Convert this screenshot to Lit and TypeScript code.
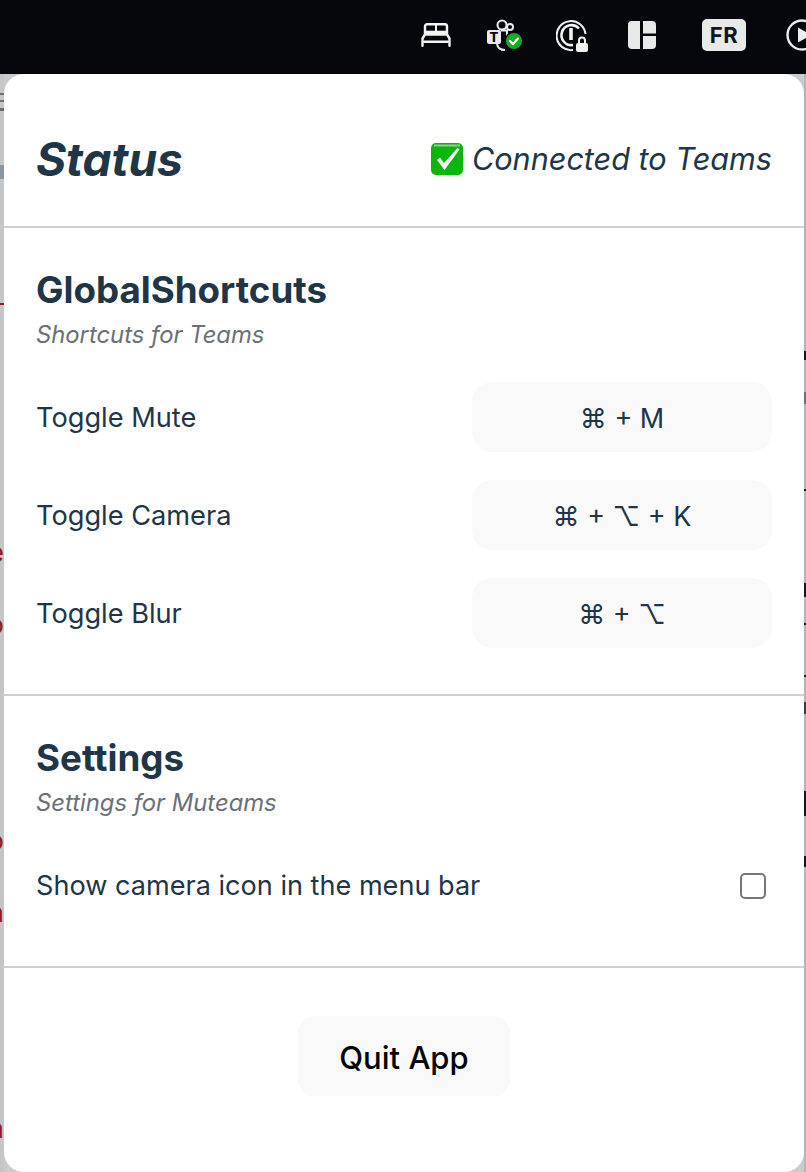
import { LitElement, html, css } from "lit";
import { customElement } from "lit/decorators.js";

const leftMarks = [
  { t: "e", y: 541 },
  { t: "o", y: 613 },
  { t: "o", y: 829 },
  { t: "n", y: 901 },
  { t: "a", y: 1117 },
];

const leftTicks = [
  { y: 93, h: 2, c: "#6d7075" },
  { y: 100, h: 2, c: "#6d7075" },
  { y: 108, h: 3, c: "#6d7075" },
  { y: 165, h: 14, c: "#8a96a2" },
  { y: 303, h: 2, c: "#8f1d1d" },
];

const rightTicks = [
  { y: 351, h: 9, c: "#14181f" },
  { y: 392, h: 12, c: "#5f7488" },
  { y: 489, h: 2, c: "#14181f" },
  { y: 583, h: 14, c: "#14181f" },
  { y: 623, h: 2, c: "#14181f" },
  { y: 675, h: 2, c: "#14181f" },
  { y: 702, h: 12, c: "#3a4048" },
  { y: 791, h: 25, c: "#14181f" },
  { y: 856, h: 11, c: "#14181f" },
];

@customElement("app-root")
export class AppRoot extends LitElement {
  static styles = css`
    :host {
      display: block;
      width: 806px;
      height: 1172px;
      overflow: hidden;
      background: #c9cbcc;
      font-family: Inter, "Noto Sans", sans-serif;
      color: #213547;
    }
    .menubar {
      height: 74px;
      background: #05070c;
      display: flex;
      align-items: center;
      justify-content: flex-end;
      overflow: hidden;
      box-sizing: border-box;
      padding-bottom: 4px;
    }
    .menubar svg { display: block; flex: none; }
    .i-bed { margin-right: 35px; }
    .i-teams { margin-right: 33px; }
    .i-pass { margin-right: 40px; }
    .i-layout { margin-right: 46px; }
    .fr {
      width: 44px;
      height: 32px;
      border-radius: 5px;
      background: #e8e9e9;
      color: #10161f;
      font-size: 22px;
      font-weight: 700;
      letter-spacing: 0.5px;
      display: flex;
      align-items: center;
      justify-content: center;
      margin-right: 40px;
      flex: none;
    }
    .i-play { margin-right: -14px; }
    .stage {
      height: 1098px;
      display: grid;
      grid-template-columns: 4px 800px 2px;
      background: #c9cbcc;
    }
    .edge { position: relative; overflow: hidden; }
    .edge.left { background: #c4c6c7; }
    .edge.right { background: #b3b6b9; }
    .mark {
      position: absolute;
      right: 0;
      font-size: 27px;
      line-height: 24px;
      color: #8f1d1d;
    }
    .tick { position: absolute; left: 0; width: 100%; }
    .panel {
      background: #fff;
      border-radius: 20px;
      display: flex;
      flex-direction: column;
    }
    header {
      height: 154px;
      box-sizing: border-box;
      padding: 18px 32px 0;
      display: flex;
      align-items: center;
      justify-content: space-between;
      border-bottom: 2px solid #cfcfcf;
      flex: none;
    }
    .title {
      margin: 0;
      font-size: 46px;
      font-weight: 700;
      font-style: italic;
      line-height: 54px;
    }
    .status {
      display: flex;
      align-items: center;
      gap: 9px;
      font-size: 30.6px;
      font-style: italic;
      line-height: 40px;
    }
    section {
      box-sizing: border-box;
      padding: 40px 32px 0;
      border-bottom: 2px solid #cfcfcf;
      flex: none;
    }
    .s-short { height: 468px; }
    .s-set { height: 272px; }
    h2 {
      margin: 0;
      font-size: 36.7px;
      font-weight: 700;
      line-height: 44px;
    }
    .sub {
      margin: 8px 0 0;
      font-size: 23.8px;
      font-style: italic;
      line-height: 30px;
      color: #6b6f76;
    }
    .rows {
      margin-top: 32px;
      display: flex;
      flex-direction: column;
      gap: 28px;
    }
    .row {
      display: flex;
      align-items: center;
      justify-content: space-between;
      font-size: 27.2px;
    }
    .key {
      width: 300px;
      height: 70px;
      box-sizing: border-box;
      padding-top: 2px;
      border-radius: 20px;
      background: #f9f9f9;
      display: flex;
      align-items: center;
      justify-content: center;
      font-size: 27px;
      font-weight: 400;
      white-space: pre;
    }
    .setting {
      margin-top: 48px;
      display: flex;
      align-items: center;
      justify-content: space-between;
      font-size: 27.1px;
      line-height: 40px;
    }
    .check {
      width: 26px;
      height: 26px;
      box-sizing: border-box;
      border: 2px solid #767676;
      border-radius: 5px;
      margin-right: 6px;
      background: #fff;
    }
    footer {
      flex: 1;
      display: flex;
      justify-content: center;
      padding-top: 48px;
    }
    .quit {
      width: 212px;
      height: 80px;
      padding: 2px 0 0;
      border: 0;
      border-radius: 16px;
      background: #f9f9f9;
      font-family: inherit;
      font-size: 31px;
      font-weight: 500;
      color: #050505;
    }
  `;

  render() {
    return html`
      <div class="menubar">
        <svg class="i-bed" width="30" height="24" viewBox="0 0 30 24" fill="none" stroke="#f3f4f4" stroke-width="2.400" stroke-linejoin="round" stroke-linecap="round">
          <path d="M4 11V3.500Q4 1.300 6.300 1.300H23.700Q26 1.300 26 3.500V11" />
          <path d="M1.500 22.700V15.500L4 11.500H26L28.500 15.500V22.700M1.500 18.800H28.500" />
          <path d="M5 9.500H25" stroke-width="3.600" stroke-linecap="butt" />
          <path d="M15 1.500V8" stroke-width="2" />
        </svg>
        <svg class="i-teams" width="37" height="33" viewBox="0 0 37 33">
          <circle cx="16" cy="6" r="4.500" fill="none" stroke="#e9eaea" stroke-width="2" />
          <circle cx="24" cy="8" r="3" fill="none" stroke="#e9eaea" stroke-width="2" />
          <path d="M15 11.500H21V18M11 25q1 6 8 6" fill="none" stroke="#e9eaea" stroke-width="2" />
          <rect x="1" y="11" width="14" height="14" rx="2" fill="#e9eaea" />
          <text x="8" y="23" text-anchor="middle" font-family="Inter, sans-serif" font-weight="800" font-size="13" fill="#05070c">T</text>
          <circle cx="28" cy="22" r="9.500" fill="#05070c" />
          <circle cx="28" cy="22" r="8" fill="#15ac1f" />
          <path d="M24 22l3 3 5-5.500" fill="none" stroke="#fff" stroke-width="2.200" stroke-linecap="round" stroke-linejoin="round" />
        </svg>
        <svg class="i-pass" width="32" height="33" viewBox="0 0 32 33" fill="none" stroke="#f0f1f1">
          <path d="M17 31A14.500 14.500 0 1 1 29.500 15" stroke-width="2" />
          <path d="M17 26A10 10 0 1 1 23 9.500" stroke-width="2.600" />
          <path d="M15 9V21" stroke-width="3.600" />
          <path d="M23 24V21.500a3 3 0 0 1 6 0V24" stroke-width="2" />
          <rect x="20" y="24" width="12" height="9" rx="2" fill="#f0f1f1" stroke="none" />
        </svg>
        <svg class="i-layout" width="28" height="28" viewBox="0 0 28 28" fill="#e8e9e9">
          <path d="M4 0h8v28H4q-4 0-4-4V4q0-4 4-4zM15 0H24q4 0 4 4v8.500H15zM15 15H28v9q0 4-4 4h-9z" />
        </svg>
        <div class="fr">FR</div>
        <svg class="i-play" width="34" height="34" viewBox="0 0 34 34">
          <circle cx="16" cy="17" r="14.500" fill="none" stroke="#eceded" stroke-width="2.400" />
          <path d="M12 9.500v15l13-7.500z" fill="#eceded" />
        </svg>
      </div>
      <div class="stage">
        <div class="edge left">
          ${leftTicks.map((m) => html`<i class="tick" style="top:${m.y - 74}px;height:${m.h}px;background:${m.c}"></i>`)}
          ${leftMarks.map((m) => html`<span class="mark" style="top:${m.y - 74}px">${m.t}</span>`)}
        </div>
        <main class="panel">
          <header>
            <h1 class="title">Status</h1>
            <div class="status">
              <svg width="32" height="32" viewBox="0 0 32 32">
                <rect width="32" height="32" rx="5" fill="#0bb60b" />
                <rect x="3" y="1.500" width="26" height="2" fill="#8fce8f" />
                <path d="M6 17L9 14.500L13 20L26.500 5L28.500 6.500L13.500 27Z" fill="#fff" />
              </svg>
              <span>Connected to Teams</span>
            </div>
          </header>
          <section class="s-short">
            <h2>GlobalShortcuts</h2>
            <p class="sub">Shortcuts for Teams</p>
            <div class="rows">
              <div class="row"><span>Toggle Mute</span><div class="key">⌘ + M</div></div>
              <div class="row"><span>Toggle Camera</span><div class="key">⌘ + ⌥ + K</div></div>
              <div class="row"><span>Toggle Blur</span><div class="key">⌘ + ⌥</div></div>
            </div>
          </section>
          <section class="s-set">
            <h2>Settings</h2>
            <p class="sub">Settings for Muteams</p>
            <div class="setting"><span>Show camera icon in the menu bar</span><div class="check"></div></div>
          </section>
          <footer><button class="quit">Quit App</button></footer>
        </main>
        <div class="edge right">
          ${rightTicks.map((m) => html`<i class="tick" style="top:${m.y - 74}px;height:${m.h}px;background:${m.c}"></i>`)}
        </div>
      </div>
    `;
  }
}
